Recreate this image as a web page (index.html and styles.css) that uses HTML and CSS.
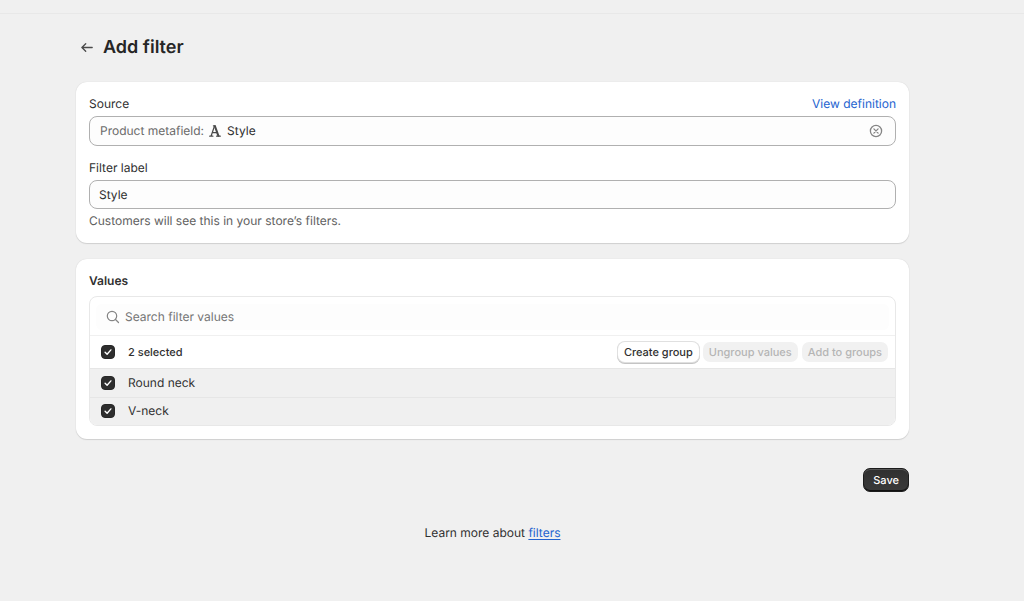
FILE: index.html
```html
<!DOCTYPE html>
<html lang="en">
<head>
<meta charset="utf-8">
<meta name="viewport" content="width=device-width, initial-scale=1">
<title>Add filter</title>
<link rel="stylesheet" href="styles.css">
</head>
<body>
<div class="topbar"></div>
<main class="page">
  <header class="page-header">
    <button class="icon-button back" type="button" aria-label="Back">
      <svg width="12" height="10" viewBox="0 0 12 10" fill="none" stroke="#4a4a4a" stroke-width="1.3" stroke-linecap="round" stroke-linejoin="round"><path d="M11.2 4.5H1M4.7 .7L.9 4.5l3.8 3.8"/></svg>
    </button>
    <h1 class="page-title">Add filter</h1>
  </header>

  <section class="card">
    <div class="field">
      <div class="label-row">
        <span class="label">Source</span>
        <a class="link" href="#definition">View definition</a>
      </div>
      <div class="control source">
        <span class="source-kind">Product metafield:</span>
        <svg class="source-icon" width="12" height="12" viewBox="0 0 12 12" fill="none" stroke="#4a4a4a" stroke-linecap="round" stroke-linejoin="round"><path stroke-width="1.2" d="M2.1 11L5.5 1M.7 11.2h3.2M3.2 7.6h5"/><path stroke-width="2" d="M6 1.4L9.4 10.8"/><path stroke-width="1.2" d="M7.6 11.2h3.7M4.4 .8h1.8"/></svg>
        <span class="source-name">Style</span>
        <button class="icon-button" type="button" aria-label="Clear source">
          <svg width="14" height="14" viewBox="0 0 14 14" fill="none" stroke="#858585" stroke-width="1.3" stroke-linecap="round"><circle cx="7" cy="7" r="5.6"/><path d="M4.9 4.9l4.2 4.2M9.1 4.9L4.9 9.1"/></svg>
        </button>
      </div>
    </div>
    <div class="field">
      <label class="label" for="filter-label">Filter label</label>
      <input class="control" id="filter-label" type="text" value="Style" aria-describedby="filter-help">
      <p class="help" id="filter-help">Customers will see this in your store’s filters.</p>
    </div>
  </section>

  <section class="card values-card">
    <h2 class="card-title">Values</h2>
    <div class="values">
      <div class="search">
        <div class="search-field">
          <svg width="14" height="14" viewBox="0 0 14 14" fill="none" stroke="#858585" stroke-width="1.2" stroke-linecap="round"><circle cx="6" cy="6" r="4.7"/><path d="M9.5 9.5l3 3"/></svg>
          <input class="search-input" type="search" placeholder="Search filter values" aria-label="Search filter values">
        </div>
      </div>
      <div class="bulk">
        <label class="check-label strong"><input class="check" type="checkbox" checked>2 selected</label>
        <div class="actions">
          <button class="button" type="button">Create group</button>
          <button class="button" type="button" disabled>Ungroup values</button>
          <button class="button" type="button" disabled>Add to groups</button>
        </div>
      </div>
      <ul class="value-list">
        <li class="value"><label class="check-label"><input class="check" type="checkbox" checked>Round neck</label></li>
        <li class="value"><label class="check-label"><input class="check" type="checkbox" checked>V-neck</label></li>
      </ul>
    </div>
  </section>

  <div class="page-actions"><button class="save" type="button">Save</button></div>
  <footer class="footer">Learn more about <a class="footer-link" href="#filters">filters</a></footer>
</main>
</body>
</html>
```
FILE: styles.css
```css
* { box-sizing: border-box; }

body {
  margin: 0;
  background: #f0f0f0;
  color: #303030;
  font: 12px/16px Inter, "Liberation Sans", sans-serif;
  text-rendering: geometricPrecision;
}

h1, h2, p, ul { margin: 0; padding: 0; }
button, input { font: inherit; color: inherit; text-rendering: inherit; }

.topbar {
  height: 14px;
  border-bottom: 1px solid #e8e8e8;
}

.page { padding: 22px 115px 0 76px; }

.page-header {
  display: flex;
  align-items: center;
  gap: 10px;
  padding-left: 5px;
  margin-bottom: 22px;
}

.page-title {
  font-size: 18px;
  line-height: 24px;
  font-weight: 600;
  color: #262626;
}

.icon-button {
  display: flex;
  padding: 0;
  border: 0;
  background: none;
  cursor: pointer;
}

.card {
  display: flex;
  flex-direction: column;
  gap: 14px;
  padding: 14px 13px;
  margin-bottom: 16px;
  border-radius: 11px;
  background: #fff;
  box-shadow: 0 1px 1px #d0d0d0, 0 0 1px #c8c8c8;
}

.field {
  display: flex;
  flex-direction: column;
  gap: 4px;
}

.label-row {
  display: flex;
  justify-content: space-between;
}

.link { color: #2463cf; text-decoration: none; }

.control {
  width: 100%;
  height: 29px;
  padding: 0 9px;
  border: 1px solid #b0b0b0;
  border-radius: 8px;
  background: #fdfdfd;
}

.source {
  display: flex;
  align-items: center;
  height: 30px;
  padding: 0 12px 0 10px;
}

.source-kind { color: #6a6a6a; }
.source-icon { margin: 0 6px 0 5px; }
.source-name { flex: 1; }
.help { color: #616161; }

.values-card { gap: 7px; padding-bottom: 13px; }

.card-title {
  font-size: 12px;
  line-height: 16px;
  font-weight: 600;
}

.values {
  overflow: hidden;
  border: 1px solid #e8e8e8;
  border-radius: 8px;
}

.search { padding: 7px 6px 5px; }

.search-field {
  display: flex;
  align-items: center;
  gap: 5px;
  height: 26px;
  padding: 0 10px;
  border-radius: 6px;
  background: #fdfdfd;
}

.search-input {
  flex: 1;
  padding: 0;
  border: 0;
  outline: 0;
  background: none;
}

.search-input::placeholder { color: #757575; opacity: 1; }

.bulk {
  display: flex;
  align-items: center;
  justify-content: space-between;
  height: 33px;
  padding: 0 7px 0 11px;
  border-top: 1px solid #f0f0f0;
}

.check-label {
  display: flex;
  align-items: center;
  gap: 13px;
}

.strong { font-size: 11px; font-weight: 500; }

.check {
  appearance: none;
  width: 14px;
  height: 14px;
  margin: 0;
  border: 1px solid #7d7d7d;
  border-radius: 4px;
  background: #fff;
}

.check:checked {
  border-color: #272727;
  background: #2e2e2e url('data:image/svg+xml,<svg xmlns="http://www.w3.org/2000/svg" viewBox="0 0 12 12"><path d="M3.1 6.3l2 2 3.8-4.4" fill="none" stroke="white" stroke-width="1.4" stroke-linecap="round" stroke-linejoin="round"/></svg>') center / 12px;
}

.actions { display: flex; gap: 4px; }

.button {
  height: 20px;
  padding: 0 6px;
  border: 0;
  border-radius: 7px;
  background: #fff;
  box-shadow: 0 0 0 1px #e0e0e0, 0 1px 0 1px #c4c4c4;
  font-size: 11px;
  font-weight: 500;
}

.button:disabled {
  background: #f1f1f1;
  box-shadow: none;
  color: #b5b5b5;
}

.value-list { list-style: none; }

.value {
  height: 29px;
  padding: 6px 11px;
  border-top: 1px solid #e6e6e6;
  background: #f0f0f0;
}

.value:last-child { height: 28px; padding-top: 5px; }

.page-actions {
  display: flex;
  justify-content: flex-end;
  padding-top: 13px;
}

.save {
  height: 24px;
  padding: 0 9px;
  border: 1px solid #1c1c1c;
  border-radius: 7px;
  background: linear-gradient(#303030, #3a3a3a);
  box-shadow: inset 0 1px 0 #555, inset 0 -1px 0 #111;
  color: #fff;
  font-size: 11px;
  font-weight: 500;
}

.footer {
  padding: 32px 0;
  font-size: 12px;
  line-height: 18px;
  text-align: center;
}

.footer-link { color: #2463cf; text-underline-offset: 2px; }
```
